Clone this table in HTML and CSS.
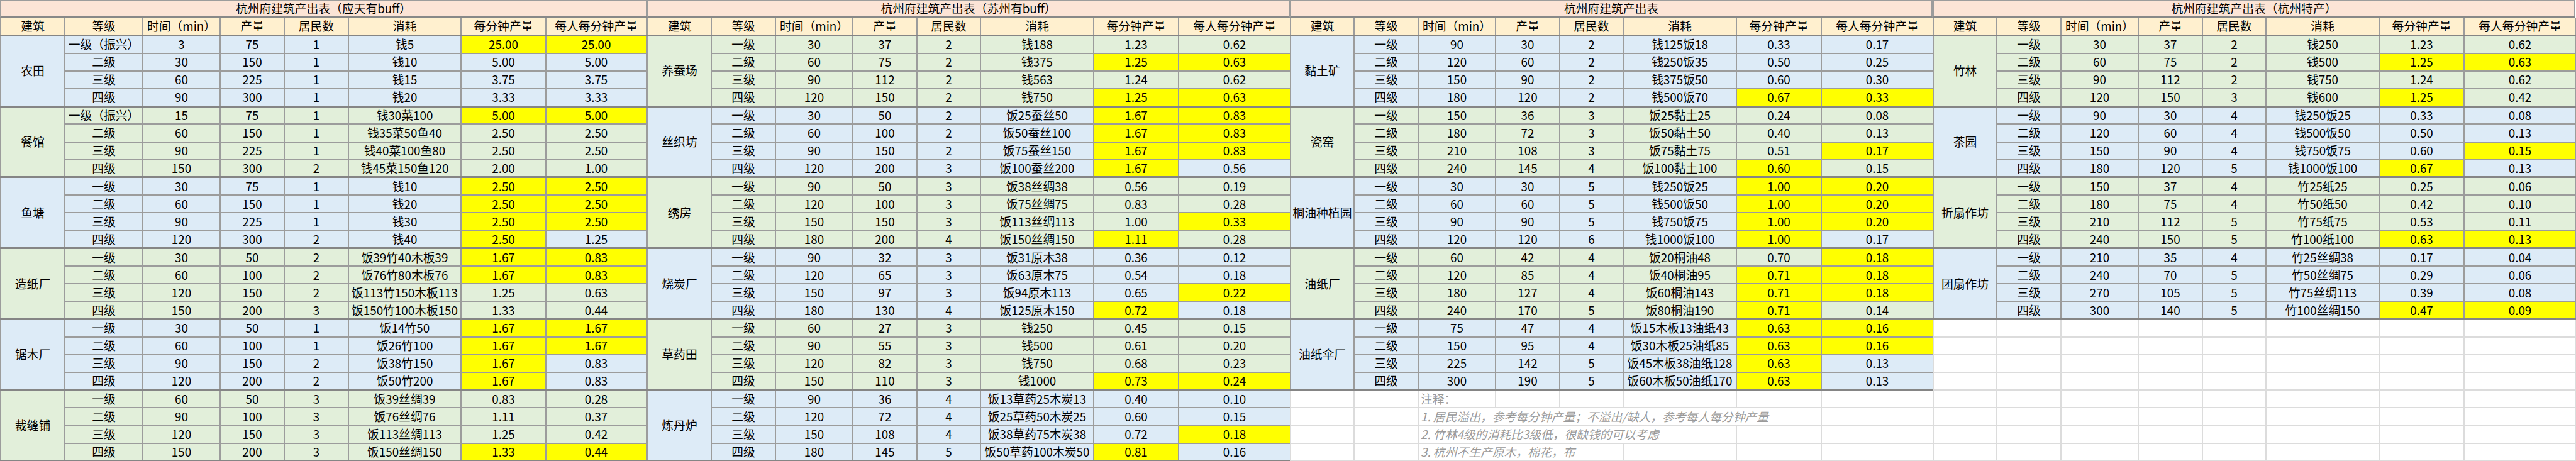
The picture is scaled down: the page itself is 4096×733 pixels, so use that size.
FILE: index.html
```html
<!DOCTYPE html>
<html lang="zh-CN">
<head>
<meta charset="utf-8">
<title>杭州府建筑产出表</title>
<link rel="stylesheet" href="styles.css">
</head>
<body>
<div class="sheet">

<section class="block w1">
<div class="cap">杭州府建筑产出表（应天有buff）</div>
<table class="t">
<colgroup><col class="a1"><col class="a2"><col class="a3"><col class="a4"><col class="a5"><col class="a6"><col class="a7"><col class="a8"></colgroup>
<tr class="head"><th>建筑</th><th>等级</th><th>时间（min）</th><th>产量</th><th>居民数</th><th>消耗</th><th>每分钟产量</th><th>每人每分钟产量</th></tr>
<tr class="bl g"><td class="b" rowspan="4">农田</td><td>一级（振兴）</td><td>3</td><td>75</td><td>1</td><td>钱5</td><td class="y">25.00</td><td class="y">25.00</td></tr>
<tr class="bl"><td>二级</td><td>30</td><td>150</td><td>1</td><td>钱10</td><td>5.00</td><td>5.00</td></tr>
<tr class="bl"><td>三级</td><td>60</td><td>225</td><td>1</td><td>钱15</td><td>3.75</td><td>3.75</td></tr>
<tr class="bl"><td>四级</td><td>90</td><td>300</td><td>1</td><td>钱20</td><td>3.33</td><td>3.33</td></tr>
<tr class="gr g"><td class="b" rowspan="4">餐馆</td><td>一级（振兴）</td><td>15</td><td>75</td><td>1</td><td>钱30菜100</td><td class="y">5.00</td><td class="y">5.00</td></tr>
<tr class="gr"><td>二级</td><td>60</td><td>150</td><td>1</td><td>钱35菜50鱼40</td><td>2.50</td><td>2.50</td></tr>
<tr class="gr"><td>三级</td><td>90</td><td>225</td><td>1</td><td>钱40菜100鱼80</td><td>2.50</td><td>2.50</td></tr>
<tr class="gr"><td>四级</td><td>150</td><td>300</td><td>2</td><td>钱45菜150鱼120</td><td>2.00</td><td>1.00</td></tr>
<tr class="bl g"><td class="b" rowspan="4">鱼塘</td><td>一级</td><td>30</td><td>75</td><td>1</td><td>钱10</td><td class="y">2.50</td><td class="y">2.50</td></tr>
<tr class="bl"><td>二级</td><td>60</td><td>150</td><td>1</td><td>钱20</td><td class="y">2.50</td><td class="y">2.50</td></tr>
<tr class="bl"><td>三级</td><td>90</td><td>225</td><td>1</td><td>钱30</td><td class="y">2.50</td><td class="y">2.50</td></tr>
<tr class="bl"><td>四级</td><td>120</td><td>300</td><td>2</td><td>钱40</td><td class="y">2.50</td><td>1.25</td></tr>
<tr class="gr g"><td class="b" rowspan="4">造纸厂</td><td>一级</td><td>30</td><td>50</td><td>2</td><td>饭39竹40木板39</td><td class="y">1.67</td><td class="y">0.83</td></tr>
<tr class="gr"><td>二级</td><td>60</td><td>100</td><td>2</td><td>饭76竹80木板76</td><td class="y">1.67</td><td class="y">0.83</td></tr>
<tr class="gr"><td>三级</td><td>120</td><td>150</td><td>2</td><td>饭113竹150木板113</td><td>1.25</td><td>0.63</td></tr>
<tr class="gr"><td>四级</td><td>150</td><td>200</td><td>3</td><td>饭150竹100木板150</td><td>1.33</td><td>0.44</td></tr>
<tr class="bl g"><td class="b" rowspan="4">锯木厂</td><td>一级</td><td>30</td><td>50</td><td>1</td><td>饭14竹50</td><td class="y">1.67</td><td class="y">1.67</td></tr>
<tr class="bl"><td>二级</td><td>60</td><td>100</td><td>1</td><td>饭26竹100</td><td class="y">1.67</td><td class="y">1.67</td></tr>
<tr class="bl"><td>三级</td><td>90</td><td>150</td><td>2</td><td>饭38竹150</td><td class="y">1.67</td><td>0.83</td></tr>
<tr class="bl"><td>四级</td><td>120</td><td>200</td><td>2</td><td>饭50竹200</td><td class="y">1.67</td><td>0.83</td></tr>
<tr class="gr g"><td class="b" rowspan="4">裁缝铺</td><td>一级</td><td>60</td><td>50</td><td>3</td><td>饭39丝绸39</td><td>0.83</td><td>0.28</td></tr>
<tr class="gr"><td>二级</td><td>90</td><td>100</td><td>3</td><td>饭76丝绸76</td><td>1.11</td><td>0.37</td></tr>
<tr class="gr"><td>三级</td><td>120</td><td>150</td><td>3</td><td>饭113丝绸113</td><td>1.25</td><td>0.42</td></tr>
<tr class="gr last"><td>四级</td><td>150</td><td>200</td><td>3</td><td>饭150丝绸150</td><td class="y">1.33</td><td class="y">0.44</td></tr>
</table>
</section>

<section class="block w2">
<div class="cap">杭州府建筑产出表（苏州有buff）</div>
<table class="t">
<colgroup><col class="b1"><col class="b2"><col class="b3"><col class="b4"><col class="b5"><col class="b6"><col class="b7"><col class="b8"></colgroup>
<tr class="head"><th>建筑</th><th>等级</th><th>时间（min）</th><th>产量</th><th>居民数</th><th>消耗</th><th>每分钟产量</th><th>每人每分钟产量</th></tr>
<tr class="gr g"><td class="b" rowspan="4">养蚕场</td><td>一级</td><td>30</td><td>37</td><td>2</td><td>钱188</td><td>1.23</td><td>0.62</td></tr>
<tr class="gr"><td>二级</td><td>60</td><td>75</td><td>2</td><td>钱375</td><td class="y">1.25</td><td class="y">0.63</td></tr>
<tr class="gr"><td>三级</td><td>90</td><td>112</td><td>2</td><td>钱563</td><td>1.24</td><td>0.62</td></tr>
<tr class="gr"><td>四级</td><td>120</td><td>150</td><td>2</td><td>钱750</td><td class="y">1.25</td><td class="y">0.63</td></tr>
<tr class="bl g"><td class="b" rowspan="4">丝织坊</td><td>一级</td><td>30</td><td>50</td><td>2</td><td>饭25蚕丝50</td><td class="y">1.67</td><td class="y">0.83</td></tr>
<tr class="bl"><td>二级</td><td>60</td><td>100</td><td>2</td><td>饭50蚕丝100</td><td class="y">1.67</td><td class="y">0.83</td></tr>
<tr class="bl"><td>三级</td><td>90</td><td>150</td><td>2</td><td>饭75蚕丝150</td><td class="y">1.67</td><td class="y">0.83</td></tr>
<tr class="bl"><td>四级</td><td>120</td><td>200</td><td>3</td><td>饭100蚕丝200</td><td class="y">1.67</td><td>0.56</td></tr>
<tr class="gr g"><td class="b" rowspan="4">绣房</td><td>一级</td><td>90</td><td>50</td><td>3</td><td>饭38丝绸38</td><td>0.56</td><td>0.19</td></tr>
<tr class="gr"><td>二级</td><td>120</td><td>100</td><td>3</td><td>饭75丝绸75</td><td>0.83</td><td>0.28</td></tr>
<tr class="gr"><td>三级</td><td>150</td><td>150</td><td>3</td><td>饭113丝绸113</td><td>1.00</td><td class="y">0.33</td></tr>
<tr class="gr"><td>四级</td><td>180</td><td>200</td><td>4</td><td>饭150丝绸150</td><td class="y">1.11</td><td>0.28</td></tr>
<tr class="bl g"><td class="b" rowspan="4">烧炭厂</td><td>一级</td><td>90</td><td>32</td><td>3</td><td>饭31原木38</td><td>0.36</td><td>0.12</td></tr>
<tr class="bl"><td>二级</td><td>120</td><td>65</td><td>3</td><td>饭63原木75</td><td>0.54</td><td>0.18</td></tr>
<tr class="bl"><td>三级</td><td>150</td><td>97</td><td>3</td><td>饭94原木113</td><td>0.65</td><td class="y">0.22</td></tr>
<tr class="bl"><td>四级</td><td>180</td><td>130</td><td>4</td><td>饭125原木150</td><td class="y">0.72</td><td>0.18</td></tr>
<tr class="gr g"><td class="b" rowspan="4">草药田</td><td>一级</td><td>60</td><td>27</td><td>3</td><td>钱250</td><td>0.45</td><td>0.15</td></tr>
<tr class="gr"><td>二级</td><td>90</td><td>55</td><td>3</td><td>钱500</td><td>0.61</td><td>0.20</td></tr>
<tr class="gr"><td>三级</td><td>120</td><td>82</td><td>3</td><td>钱750</td><td>0.68</td><td>0.23</td></tr>
<tr class="gr"><td>四级</td><td>150</td><td>110</td><td>3</td><td>钱1000</td><td class="y">0.73</td><td class="y">0.24</td></tr>
<tr class="bl g"><td class="b" rowspan="4">炼丹炉</td><td>一级</td><td>90</td><td>36</td><td>4</td><td>饭13草药25木炭13</td><td>0.40</td><td>0.10</td></tr>
<tr class="bl"><td>二级</td><td>120</td><td>72</td><td>4</td><td>饭25草药50木炭25</td><td>0.60</td><td>0.15</td></tr>
<tr class="bl"><td>三级</td><td>150</td><td>108</td><td>4</td><td>饭38草药75木炭38</td><td>0.72</td><td class="y">0.18</td></tr>
<tr class="bl last"><td>四级</td><td>180</td><td>145</td><td>5</td><td>饭50草药100木炭50</td><td class="y">0.81</td><td>0.16</td></tr>
</table>
</section>

<section class="block w2">
<div class="cap">杭州府建筑产出表</div>
<table class="t">
<colgroup><col class="b1"><col class="b2"><col class="b3"><col class="b4"><col class="b5"><col class="b6"><col class="b7"><col class="b8"></colgroup>
<tr class="head"><th>建筑</th><th>等级</th><th>时间（min）</th><th>产量</th><th>居民数</th><th>消耗</th><th>每分钟产量</th><th>每人每分钟产量</th></tr>
<tr class="bl g"><td class="b" rowspan="4">黏土矿</td><td>一级</td><td>90</td><td>30</td><td>2</td><td>钱125饭18</td><td>0.33</td><td>0.17</td></tr>
<tr class="bl"><td>二级</td><td>120</td><td>60</td><td>2</td><td>钱250饭35</td><td>0.50</td><td>0.25</td></tr>
<tr class="bl"><td>三级</td><td>150</td><td>90</td><td>2</td><td>钱375饭50</td><td>0.60</td><td>0.30</td></tr>
<tr class="bl"><td>四级</td><td>180</td><td>120</td><td>2</td><td>钱500饭70</td><td class="y">0.67</td><td class="y">0.33</td></tr>
<tr class="gr g"><td class="b" rowspan="4">瓷窑</td><td>一级</td><td>150</td><td>36</td><td>3</td><td>饭25黏土25</td><td>0.24</td><td>0.08</td></tr>
<tr class="gr"><td>二级</td><td>180</td><td>72</td><td>3</td><td>饭50黏土50</td><td>0.40</td><td>0.13</td></tr>
<tr class="gr"><td>三级</td><td>210</td><td>108</td><td>3</td><td>饭75黏土75</td><td>0.51</td><td class="y">0.17</td></tr>
<tr class="gr"><td>四级</td><td>240</td><td>145</td><td>4</td><td>饭100黏土100</td><td class="y">0.60</td><td>0.15</td></tr>
<tr class="bl g"><td class="b" rowspan="4">桐油种植园</td><td>一级</td><td>30</td><td>30</td><td>5</td><td>钱250饭25</td><td class="y">1.00</td><td class="y">0.20</td></tr>
<tr class="bl"><td>二级</td><td>60</td><td>60</td><td>5</td><td>钱500饭50</td><td class="y">1.00</td><td class="y">0.20</td></tr>
<tr class="bl"><td>三级</td><td>90</td><td>90</td><td>5</td><td>钱750饭75</td><td class="y">1.00</td><td class="y">0.20</td></tr>
<tr class="bl"><td>四级</td><td>120</td><td>120</td><td>6</td><td>钱1000饭100</td><td class="y">1.00</td><td>0.17</td></tr>
<tr class="gr g"><td class="b" rowspan="4">油纸厂</td><td>一级</td><td>60</td><td>42</td><td>4</td><td>饭20桐油48</td><td>0.70</td><td class="y">0.18</td></tr>
<tr class="gr"><td>二级</td><td>120</td><td>85</td><td>4</td><td>饭40桐油95</td><td class="y">0.71</td><td class="y">0.18</td></tr>
<tr class="gr"><td>三级</td><td>180</td><td>127</td><td>4</td><td>饭60桐油143</td><td class="y">0.71</td><td class="y">0.18</td></tr>
<tr class="gr"><td>四级</td><td>240</td><td>170</td><td>5</td><td>饭80桐油190</td><td class="y">0.71</td><td>0.14</td></tr>
<tr class="bl g"><td class="b" rowspan="4">油纸伞厂</td><td>一级</td><td>75</td><td>47</td><td>4</td><td>饭15木板13油纸43</td><td class="y">0.63</td><td class="y">0.16</td></tr>
<tr class="bl"><td>二级</td><td>150</td><td>95</td><td>4</td><td>饭30木板25油纸85</td><td class="y">0.63</td><td class="y">0.16</td></tr>
<tr class="bl"><td>三级</td><td>225</td><td>142</td><td>5</td><td>饭45木板38油纸128</td><td class="y">0.63</td><td>0.13</td></tr>
<tr class="bl last"><td>四级</td><td>300</td><td>190</td><td>5</td><td>饭60木板50油纸170</td><td class="y">0.63</td><td>0.13</td></tr>
<tr class="blank"><td></td><td></td><td class="note plain">注释：</td><td></td><td></td><td></td><td></td><td></td></tr>
<tr class="blank"><td></td><td></td><td class="note" colspan="5">1. 居民溢出，参考每分钟产量；不溢出/缺人，参考每人每分钟产量</td><td></td></tr>
<tr class="blank"><td></td><td></td><td class="note" colspan="4">2. 竹林4级的消耗比3级低，很缺钱的可以考虑</td><td></td><td></td></tr>
<tr class="blank"><td></td><td></td><td class="note" colspan="3">3. 杭州不生产原木，棉花，布</td><td></td><td></td><td></td></tr>
</table>
</section>

<section class="block w2">
<div class="cap">杭州府建筑产出表（杭州特产）</div>
<table class="t">
<colgroup><col class="b1"><col class="b2"><col class="b3"><col class="b4"><col class="b5"><col class="b6"><col class="b7"><col class="b8"></colgroup>
<tr class="head"><th>建筑</th><th>等级</th><th>时间（min）</th><th>产量</th><th>居民数</th><th>消耗</th><th>每分钟产量</th><th>每人每分钟产量</th></tr>
<tr class="gr g"><td class="b" rowspan="4">竹林</td><td>一级</td><td>30</td><td>37</td><td>2</td><td>钱250</td><td>1.23</td><td>0.62</td></tr>
<tr class="gr"><td>二级</td><td>60</td><td>75</td><td>2</td><td>钱500</td><td class="y">1.25</td><td class="y">0.63</td></tr>
<tr class="gr"><td>三级</td><td>90</td><td>112</td><td>2</td><td>钱750</td><td>1.24</td><td>0.62</td></tr>
<tr class="gr"><td>四级</td><td>120</td><td>150</td><td>3</td><td>钱600</td><td class="y">1.25</td><td>0.42</td></tr>
<tr class="bl g"><td class="b" rowspan="4">茶园</td><td>一级</td><td>90</td><td>30</td><td>4</td><td>钱250饭25</td><td>0.33</td><td>0.08</td></tr>
<tr class="bl"><td>二级</td><td>120</td><td>60</td><td>4</td><td>钱500饭50</td><td>0.50</td><td>0.13</td></tr>
<tr class="bl"><td>三级</td><td>150</td><td>90</td><td>4</td><td>钱750饭75</td><td>0.60</td><td class="y">0.15</td></tr>
<tr class="bl"><td>四级</td><td>180</td><td>120</td><td>5</td><td>钱1000饭100</td><td class="y">0.67</td><td>0.13</td></tr>
<tr class="gr g"><td class="b" rowspan="4">折扇作坊</td><td>一级</td><td>150</td><td>37</td><td>4</td><td>竹25纸25</td><td>0.25</td><td>0.06</td></tr>
<tr class="gr"><td>二级</td><td>180</td><td>75</td><td>4</td><td>竹50纸50</td><td>0.42</td><td>0.10</td></tr>
<tr class="gr"><td>三级</td><td>210</td><td>112</td><td>5</td><td>竹75纸75</td><td>0.53</td><td>0.11</td></tr>
<tr class="gr"><td>四级</td><td>240</td><td>150</td><td>5</td><td>竹100纸100</td><td class="y">0.63</td><td class="y">0.13</td></tr>
<tr class="bl g"><td class="b" rowspan="4">团扇作坊</td><td>一级</td><td>210</td><td>35</td><td>4</td><td>竹25丝绸38</td><td>0.17</td><td>0.04</td></tr>
<tr class="bl"><td>二级</td><td>240</td><td>70</td><td>5</td><td>竹50丝绸75</td><td>0.29</td><td>0.06</td></tr>
<tr class="bl"><td>三级</td><td>270</td><td>105</td><td>5</td><td>竹75丝绸113</td><td>0.39</td><td>0.08</td></tr>
<tr class="bl last"><td>四级</td><td>300</td><td>140</td><td>5</td><td>竹100丝绸150</td><td class="y">0.47</td><td class="y">0.09</td></tr>
<tr class="blank"><td></td><td></td><td></td><td></td><td></td><td></td><td></td><td></td></tr>
<tr class="blank"><td></td><td></td><td></td><td></td><td></td><td></td><td></td><td></td></tr>
<tr class="blank"><td></td><td></td><td></td><td></td><td></td><td></td><td></td><td></td></tr>
<tr class="blank"><td></td><td></td><td></td><td></td><td></td><td></td><td></td><td></td></tr>
<tr class="blank"><td></td><td></td><td></td><td></td><td></td><td></td><td></td><td></td></tr>
<tr class="blank"><td></td><td></td><td></td><td></td><td></td><td></td><td></td><td></td></tr>
<tr class="blank"><td></td><td></td><td></td><td></td><td></td><td></td><td></td><td></td></tr>
<tr class="blank"><td></td><td></td><td></td><td></td><td></td><td></td><td></td><td></td></tr>
</table>
</section>

</div>
</body>
</html>
```

FILE: styles.css
```css
* { box-sizing: border-box; }
html, body { margin: 0; padding: 0; background: #ffffff; }
body {
  font-family: "Noto Sans CJK SC", "Liberation Sans", sans-serif;
  font-size: 18.8px;
  color: #000000;
}
.sheet {
  display: flex;
  align-items: flex-start;
  width: 4096px;
  height: 733px;
  overflow: hidden;
}
.block {
  display: flex;
  flex-direction: column;
  flex: none;
  height: 733px;
}
.w1 { width: 1029px; }
.w2 { width: 1022px; }

.cap {
  flex: none;
  height: 28.2px;
  display: flex;
  align-items: center;
  justify-content: center;
  background: #fce4d6;
  border: 2px solid #9c9c9c;
  border-bottom: 3px solid #888888;
  white-space: nowrap;
  line-height: 1;
}

.t {
  width: 100%;
  flex: 1 1 auto;
  border-collapse: collapse;
  table-layout: fixed;
}

.a1 { width: 102px; } .a2 { width: 124px; } .a3 { width: 123px; } .a4 { width: 102px; }
.a5 { width: 102px; } .a6 { width: 179px; } .a7 { width: 135px; } .a8 { width: 160px; }
.b1 { width: 101px; } .b2 { width: 102px; } .b3 { width: 123px; } .b4 { width: 102px; }
.b5 { width: 101px; } .b6 { width: 180px; } .b7 { width: 135px; } .b8 { width: 178px; }

.t tr { height: 28.19px; }
.t td, .t th {
  border: 2px solid #9c9c9c;
  padding: 0;
  text-align: center;
  vertical-align: middle;
  white-space: nowrap;
  overflow: hidden;
  font-weight: 400;
  line-height: 1;
}
.head th { background: #fff0cf; border-top: none; }
.bl td { background: #ddebf7; }
.gr td { background: #e2efda; }
.t td.y { background: #ffff00; }
.g td { border-top: 3px solid #858585; }
.t td.b { border-top: 3px solid #858585; border-bottom: 3px solid #858585; }
.last td { border-bottom: 3px solid #858585; }
.blank td { background: #ffffff; border-color: #dcdcdc; }
.t .note {
  color: #9a9a9a;
  text-align: left;
  font-style: italic;
  padding-left: 3px;
}
.t .note.plain { font-style: normal; }
```
